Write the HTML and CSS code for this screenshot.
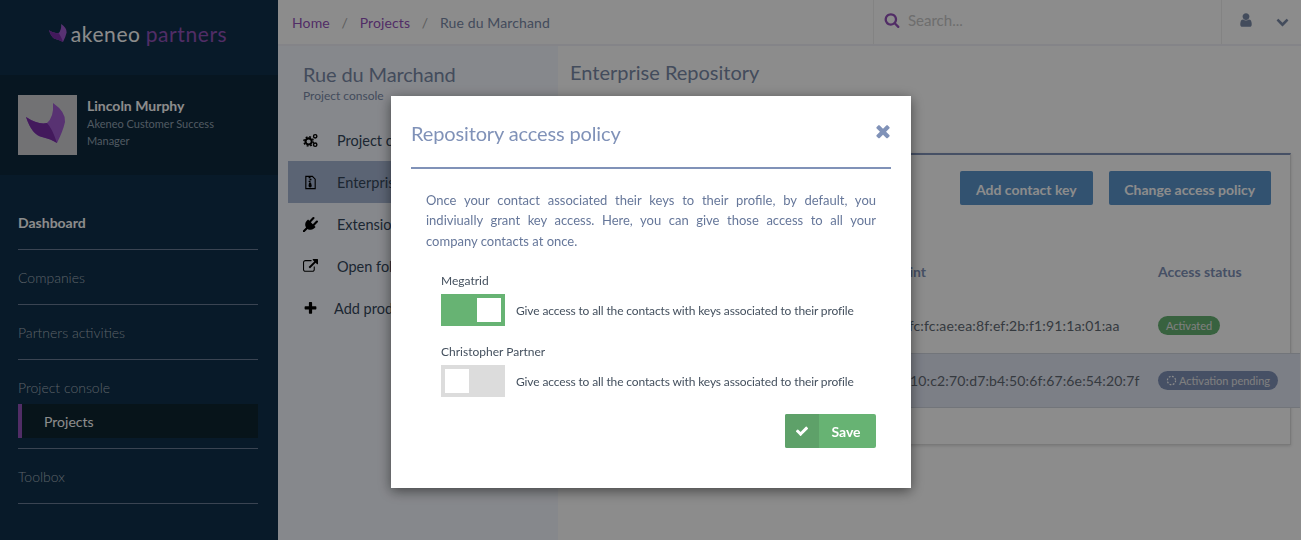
FILE: index.html
```html
<!DOCTYPE html>
<html lang="en">
<head>
    <meta charset="UTF-8">
    <title>Rue du Marchand</title>
    <link rel="stylesheet" href="styles.css">
</head>
<body>
    <div class="app">
        <aside class="sidebar">
            <div class="logo">
                <svg class="logo-mark" viewBox="6 6 44 44"><path fill="#a05cd0" d="M35 8Q48 17 47 27Q45 36 39 48Q33 44 24 42Q14 40 8 22Q20 30 29 28Q36 22 35 8z"/><path fill="#7a2ea8" d="M8 22Q20 30 29 28Q34 33 39 48Q33 44 24 42Q14 40 8 22z"/></svg>
                <span class="logo-name">akeneo</span>
                <span class="logo-sub">partners</span>
            </div>
            <div class="profile">
                <div class="avatar">
                    <svg viewBox="0 0 59 60"><path fill="#a05cd0" d="M35 8Q48 17 47 27Q45 36 39 48Q33 44 24 42Q14 40 8 22Q20 30 29 28Q36 22 35 8z"/><path fill="#7a2ea8" d="M8 22Q20 30 29 28Q34 33 39 48Q33 44 24 42Q14 40 8 22z"/></svg>
                </div>
                <div class="profile-text">
                    <div class="profile-name">Lincoln Murphy</div>
                    <div class="profile-role">Akeneo Customer Success Manager</div>
                </div>
            </div>
            <ul class="nav">
                <li class="nav-item active">Dashboard</li>
                <li class="nav-item">Companies</li>
                <li class="nav-item">Partners activities</li>
                <li class="nav-item has-sub">
                    Project console
                    <div class="nav-sub">Projects</div>
                </li>
                <li class="nav-item">Toolbox</li>
            </ul>
        </aside>

        <div class="main">
            <header class="topbar">
                <div class="crumbs">
                    <a href="#">Home</a><span class="sep">/</span><a href="#">Projects</a><span class="sep">/</span><span>Rue du Marchand</span>
                </div>
                <div class="search">
                    <svg class="search-icon" viewBox="0 0 1792 1792"><path d="M1216 832q0-185-131.500-316.500t-316.500-131.500-316.500 131.500-131.500 316.500 131.500 316.500 316.500 131.500 316.500-131.500 131.500-316.500zm512 832q0 52-38 90t-90 38q-54 0-90-38l-343-342q-179 124-399 124-143 0-273.500-55.500t-225-150-150-225-55.500-273.500 55.500-273.500 150-225 225-150 273.500-55.500 273.500 55.500 225 150 150 225 55.500 273.500q0 220-124 399l343 343q37 37 37 90z"/></svg>
                    <span class="search-text">Search...</span>
                </div>
                <div class="account">
                    <svg class="user-icon" viewBox="0 0 1792 1792"><path d="M1536 1399q0 109-62.500 187t-150.500 78h-854q-88 0-150.500-78t-62.500-187q0-85 8.500-160.500t31.500-152 58.500-131 94-89 134.500-34.500q131 128 313 128t313-128q76 0 134.500 34.500t94 89 58.500 131 31.500 152 8.500 160.500zm-256-887q0 159-112.500 271.500t-271.500 112.500-271.500-112.500-112.500-271.500 112.500-271.500 271.500-112.500 271.500 112.500 112.500 271.500z"/></svg>
                    <svg class="chevron" viewBox="0 0 1792 1792"><path d="M1683 808l-742 741q-19 19-45 19t-45-19l-742-741q-19-19-19-45.500t19-45.500l166-165q19-19 45-19t45 19l531 531 531-531q19-19 45-19t45 19l166 165q19 19 19 45.500t-19 45.500z"/></svg>
                </div>
            </header>

            <div class="content">
                <section class="project">
                    <h2 class="project-title">Rue du Marchand</h2>
                    <div class="project-sub">Project console</div>
                    <ul class="menu">
                        <li>
                            <svg class="menu-icon" viewBox="0 0 16 16"><circle cx="6" cy="9" r="3.300" fill="none" stroke="#000" stroke-width="2.200"/><circle cx="6" cy="9" r="5" fill="none" stroke="#000" stroke-width="1.600" stroke-dasharray="2 1.930"/><circle cx="13" cy="3.500" r="1.800" fill="none" stroke="#000" stroke-width="1.500"/><circle cx="13" cy="12.500" r="1.800" fill="none" stroke="#000" stroke-width="1.500"/></svg>
                            Project configuration
                        </li>
                        <li class="current">
                            <svg class="menu-icon" viewBox="0 0 16 16"><path d="M3 1.500h7l3 3v10H3z" fill="none" stroke="#000" stroke-width="1.200"/><path d="M6 2h2v1.500H6zM7 4h2v1.500H7zM6 6h2v1.500H6zM6.500 8h2l.8 3.500a1.500 1.500 0 1 1-3.400 0z"/></svg>
                            Enterprise Repository
                        </li>
                        <li>
                            <svg class="menu-icon" viewBox="0 0 1792 1792"><path d="M1755 453q37 38 37 90.500t-37 90.500l-401 400 150 150-160 160q-163 163-389.500 186.500t-411.500-100.500l-362 362h-181v-181l362-362q-124-185-100.500-411.500t186.500-389.500l160-160 150 150 400-401q38-37 91-37t90 37 37 90.500-37 90.500l-400 401 234 234 401-400q38-37 91-37t90 37z"/></svg>
                            Extensions
                        </li>
                        <li>
                            <svg class="menu-icon" viewBox="0 0 1792 1792"><path d="M1408 928v320q0 119-84.500 203.500t-203.500 84.500h-832q-119 0-203.500-84.500t-84.500-203.500v-832q0-119 84.500-203.500t203.500-84.500h704q14 0 23 9t9 23v64q0 14-9 23t-23 9h-704q-66 0-113 47t-47 113v832q0 66 47 113t113 47h832q66 0 113-47t47-113v-320q0-14 9-23t23-9h64q14 0 23 9t9 23zm384-864v512q0 26-19 45t-45 19-45-19l-176-176-652 652q-10 10-23 10t-23-10l-114-114q-10-10-10-23t10-23l652-652-176-176q-19-19-19-45t19-45 45-19h512q26 0 45 19t19 45z"/></svg>
                            Open folder
                        </li>
                        <li class="add">
                            <svg class="menu-icon" viewBox="0 0 1792 1792"><path d="M1600 736v192q0 40-28 68t-68 28h-416v416q0 40-28 68t-68 28h-192q-40 0-68-28t-28-68v-416h-416q-40 0-68-28t-28-68v-192q0-40 28-68t68-28h416v-416q0-40 28-68t68-28h192q40 0 68 28t28 68v416h416q40 0 68 28t28 68z"/></svg>
                            Add product
                        </li>
                    </ul>
                </section>

                <section class="repo">
                    <h2 class="repo-title">Enterprise Repository</h2>
                    <div class="card">
                        <div class="card-actions">
                            <a class="btn" href="#">Add contact key</a>
                            <a class="btn" href="#">Change access policy</a>
                        </div>
                        <div class="row head">
                            <div></div>
                            <div>Fingerprint</div>
                            <div>Access status</div>
                        </div>
                        <div class="row">
                            <div></div>
                            <div class="fp">a3:51:0e:fc:fc:ae:ea:8f:ef:2b:f1:91:1a:01:aa</div>
                            <div><span class="badge ok">Activated</span></div>
                        </div>
                        <div class="row pending">
                            <div></div>
                            <div class="fp">6b:19:d4:10:c2:70:d7:b4:50:6f:67:6e:54:20:7f</div>
                            <div><span class="badge wait"><svg class="spin" viewBox="0 0 12 12"><circle cx="6" cy="6" r="4.500" fill="none" stroke="#fff" stroke-width="1.300" stroke-dasharray="2 1.530"/></svg>Activation pending</span></div>
                        </div>
                    </div>
                </section>
            </div>
        </div>
    </div>

    <div class="overlay">
        <div class="modal">
            <div class="modal-head">
                <h3 class="modal-title">Repository access policy</h3>
                <svg class="modal-close" viewBox="0 0 1408 1792"><path d="M1298 1322q0 40-28 68l-136 136q-28 28-68 28t-68-28l-294-294-294 294q-28 28-68 28t-68-28l-136-136q-28-28-28-68t28-68l294-294-294-294q-28-28-28-68t28-68l136-136q28-28 68-28t68 28l294 294 294-294q28-28 68-28t68 28l136 136q28 28 28 68t-28 68l-294 294 294 294q28 28 28 68z"/></svg>
            </div>
            <p class="modal-text">Once your contact associated their keys to their profile, by default, you indiviually grant key access. Here, you can give those access to all your company contacts at once.</p>
            <div class="company">
                <div class="company-name">Megatrid</div>
                <div class="company-line">
                    <span class="toggle on"><i></i></span>
                    <span>Give access to all the contacts with keys associated to their profile</span>
                </div>
            </div>
            <div class="company">
                <div class="company-name">Christopher Partner</div>
                <div class="company-line">
                    <span class="toggle"><i></i></span>
                    <span>Give access to all the contacts with keys associated to their profile</span>
                </div>
            </div>
            <div class="modal-foot">
                <a class="save" href="#">
                    <span class="save-icon"><svg viewBox="0 0 1792 1792"><path d="M1671 566q0 40-28 68l-724 724-136 136q-28 28-68 28t-68-28l-136-136-362-362q-28-28-28-68t28-68l136-136q28-28 68-28t68 28l294 295 656-657q28-28 68-28t68 28l136 136q28 28 28 68z"/></svg></span>
                    <span class="save-text">Save</span>
                </a>
            </div>
        </div>
    </div>
</body>
</html>
```

FILE: styles.css
```css
*{
    margin: 0;
    padding: 0;
    box-sizing: border-box;
}
ul{
    list-style: none;
}
a{
    text-decoration: none;
    color: inherit;
}
body{
    height: 540px;
    overflow: hidden;
    font-family: "Lato", "Liberation Sans", sans-serif;
    color: #2c3e50;
    background: #fff;
}
.app{
    display: flex;
    height: 540px;
}

/* sidebar */
.sidebar{
    width: 278px;
    flex: none;
    background: #0f314b;
}
.logo{
    height: 75px;
    display: flex;
    align-items: center;
    justify-content: center;
    padding: 0 3px 9px 0;
    font-size: 21px;
    letter-spacing: 0.6px;
}
.logo-mark{
    width: 20px;
    height: 20px;
    margin-right: 3px;
}
.logo-name{
    color: #fff;
    margin-right: 5px;
}
.logo-sub{
    color: #9452ba;
}
.profile{
    height: 100px;
    background: #0d283c;
    display: flex;
    align-items: center;
    padding: 0 18px;
    gap: 10px;
}
.avatar{
    width: 59px;
    height: 60px;
    flex: none;
    background: #cfcfd4;
}
.avatar svg{
    display: block;
    width: 59px;
    height: 60px;
}
.profile-text{
    width: 140px;
    padding-bottom: 4px;
}
.profile-name{
    font-size: 14px;
    font-weight: 700;
    color: #fff;
    line-height: 18px;
}
.profile-role{
    font-size: 11px;
    color: #93a3b3;
    line-height: 17px;
}
.nav{
    padding: 20px 20px 0 18px;
}
.nav-item{
    border-bottom: 1px solid #6b7d96;
    font-size: 14px;
    font-weight: 300;
    color: #a4b0bc;
    line-height: 17px;
    padding: 19px 0 18px;
}
.nav-item.active{
    font-weight: 700;
    color: #fff;
}
.nav-item.has-sub{
    padding-bottom: 10px;
}
.nav-sub{
    margin-top: 8px;
    height: 34px;
    line-height: 35px;
    background: #0d2530;
    border-left: 4px solid #9452ba;
    padding-left: 22px;
    font-weight: 400;
    color: #fff;
}

/* top bar */
.main{
    flex: 1;
    display: flex;
    flex-direction: column;
    min-width: 0;
}
.topbar{
    height: 46px;
    flex: none;
    display: flex;
    align-items: stretch;
    background: #fff;
    border-bottom: 2px solid #f0f0f8;
    font-size: 14px;
}
.crumbs{
    flex: 1;
    padding: 14px 0 0 14px;
    line-height: 18px;
    letter-spacing: 0.12px;
    color: #7a8aa8;
}
.crumbs a{
    color: #9452ba;
}
.sep{
    margin: 0 11.700px;
    color: #aaa;
}
.search{
    width: 349px;
    border-left: 1px solid #eee;
    border-right: 1px solid #eee;
    display: flex;
    align-items: center;
    padding: 0 0 4px 10px;
}
.search-icon{
    width: 16px;
    height: 16px;
    fill: #9452ba;
    margin-right: 8px;
}
.search-text{
    color: #c8c8c8;
    font-size: 15px;
}
.account{
    width: 79px;
    display: flex;
    align-items: center;
    padding: 0 0 4px 16px;
}
.user-icon{
    width: 16px;
    height: 16px;
    fill: #7a8aa8;
    margin-right: 22px;
}
.chevron{
    width: 13px;
    height: 13px;
    fill: #7a8aa8;
    margin-top: 3px;
}

/* project column */
.content{
    flex: 1;
    display: flex;
    min-height: 0;
}
.project{
    width: 280px;
    flex: none;
    background: #f5f8ff;
    padding: 16px 0 0 10px;
}
.project-title{
    font-size: 20px;
    font-weight: 400;
    line-height: 24px;
    letter-spacing: -0.13px;
    color: #7a8aa8;
    padding-left: 15px;
}
.project-sub{
    font-size: 12px;
    line-height: 15px;
    padding-left: 15px;
    color: #7a8aa8;
    margin: 2px 0 16px;
}
.menu li{
    height: 42px;
    display: flex;
    align-items: center;
    font-size: 14.500px;
    color: #33465a;
    padding-left: 15px;
    gap: 19px;
}
.menu li.current{
    background: #a7b6d3;
}
.menu li.add{
    gap: 16px;
}
.menu-icon{
    width: 15px;
    height: 15px;
    flex: none;
}

/* repository */
.repo{
    flex: 1;
    padding: 14px 0 0 12px;
    min-width: 0;
}
.repo-title{
    font-size: 20px;
    font-weight: 400;
    line-height: 24px;
    color: #7a8aa8;
    margin-bottom: 69px;
}
.card{
    width: 721px;
    height: 292px;
    border-top: 2px solid #8092b8;
    border-right: 1px solid #ddd;
    border-bottom: 1px solid #ddd;
    box-shadow: 0 1px 3px rgba(0,0,0,0.15);
}
.card-actions{
    display: flex;
    justify-content: flex-end;
    gap: 16px;
    padding: 16px 19px 0 0;
}
.btn{
    height: 34px;
    line-height: 38px;
    padding: 0 15.750px;
    border-radius: 2px;
    background: #5b95cc;
    color: #fff;
    font-size: 14px;
    font-weight: 700;
}
.row{
    display: grid;
    grid-template-columns: 272px 301px 1fr;
    align-items: center;
    height: 55px;
    padding-left: 15px;
    font-size: 14px;
    color: #626a74;
    margin-right: -10px;
}
.row.head{
    margin-top: 50px;
    height: 43px;
    font-weight: 700;
    color: #8092b8;
    padding-bottom: 10px;
}
.fp{
    margin-left: -7px;
    letter-spacing: 0.15px;
    white-space: nowrap;
}
.row.pending{
    background: #e2e7f5;
    border-top: 1px solid #d0d5df;
    border-bottom: 1px solid #d0d5df;
}
.badge{
    display: inline-flex;
    align-items: center;
    height: 19px;
    padding: 0 8px;
    border-radius: 10px;
    font-size: 11px;
    color: #e8e8e8;
}
.badge.ok{
    background: #67b373;
}
.badge.wait{
    background: #8092b8;
}
.spin{
    width: 11px;
    height: 11px;
    margin-right: 2px;
}

/* modal */
.overlay{
    position: fixed;
    top: 0;
    left: 0;
    right: 0;
    bottom: 0;
    background: rgba(0,0,0,0.45);
    display: flex;
    justify-content: center;
    align-items: flex-start;
    padding-top: 96px;
}
.modal{
    width: 520px;
    height: 392px;
    margin-left: 1px;
    background: #fff;
    padding: 0 20px;
    box-shadow: 0 3px 12px rgba(0,0,0,0.5);
}
.modal-head{
    height: 73px;
    border-bottom: 2px solid #8092b8;
    display: flex;
    justify-content: space-between;
    align-items: flex-start;
    padding-top: 24px;
}
.modal-title{
    font-size: 20px;
    font-weight: 400;
    line-height: 26px;
    letter-spacing: -0.13px;
    color: #8092b8;
}
.modal-close{
    width: 16px;
    height: 20px;
    fill: #8092b8;
    margin-top: 1px;
}
.modal-text{
    margin: 20.750px 15px 0;
    font-size: 13px;
    line-height: 20.500px;
    text-align: justify;
    color: #66779a;
}
.company{
    padding-left: 30px;
    margin-top: 22px;
}
.company + .company{
    margin-top: 18px;
}
.company-name{
    font-size: 12px;
    line-height: 16px;
    color: #44505e;
    margin-bottom: 5px;
}
.company-line{
    display: flex;
    align-items: center;
    gap: 11px;
    font-size: 12px;
    letter-spacing: -0.13px;
    color: #44505e;
}
.toggle{
    width: 64px;
    height: 32px;
    padding: 4px;
    background: #dcdcdc;
    display: flex;
}
.toggle.on{
    background: #67b373;
    justify-content: flex-end;
}
.toggle i{
    width: 24px;
    height: 24px;
    background: #fff;
}
.modal-foot{
    display: flex;
    justify-content: flex-end;
    padding-right: 15px;
    margin-top: 17px;
}
.save{
    display: flex;
    width: 91px;
    height: 34px;
    border-radius: 2px;
    overflow: hidden;
    background: #67b373;
    color: #fff;
    font-size: 14px;
    font-weight: 700;
}
.save-icon{
    width: 34px;
    background: #5ea169;
    display: flex;
    align-items: center;
    justify-content: center;
}
.save-icon svg{
    width: 14px;
    height: 14px;
    fill: #fff;
}
.save-text{
    flex: 1;
    padding-right: 3px;
    text-align: center;
    line-height: 36px;
}
```
